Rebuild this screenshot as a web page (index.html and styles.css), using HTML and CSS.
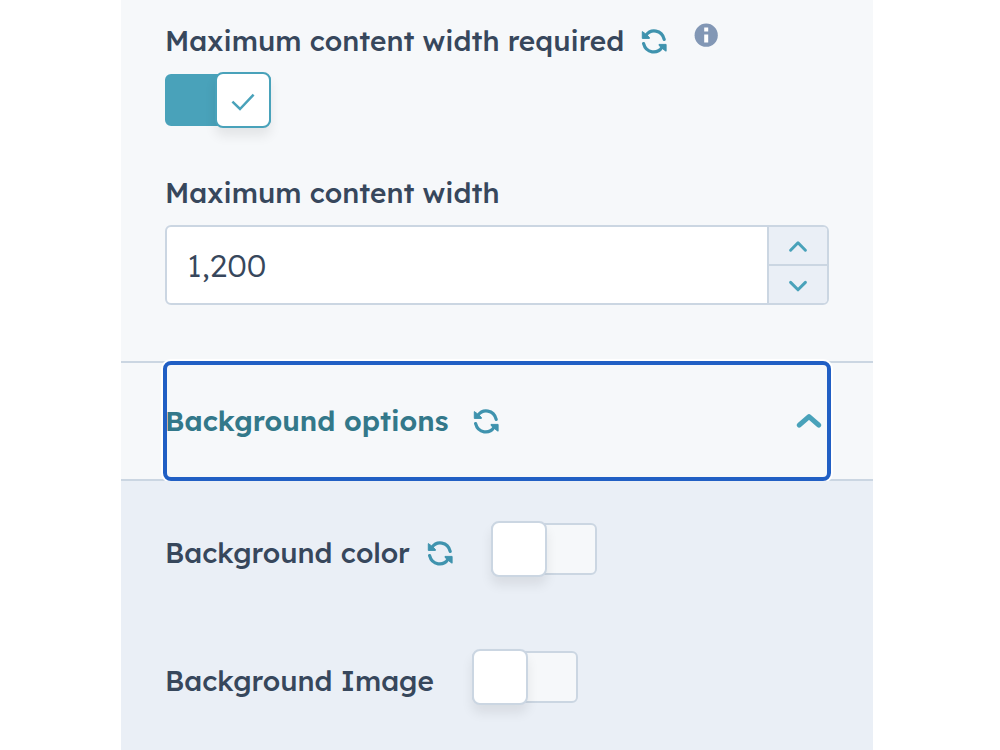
FILE: index.html
```
<!DOCTYPE html>
<html lang="en">
<head>
	<meta charset="utf-8">
	<meta name="viewport" content="width=device-width, initial-scale=1.0">
	<title>Section settings</title>
	<link rel="stylesheet" href="styles.css">
</head>
<body>

	<svg width="0" height="0" class="sprite" aria-hidden="true">
		<symbol id="refresh" viewBox="0 0 26 26">
			<path d="M5 7.4C9.5.6 20.8 1.4 23.2 11.4M2.6 15.6C5.2 25.6 16.5 26.2 21 19.4" fill="none" stroke="currentColor" stroke-width="3.2" stroke-linecap="round"/>
			<path d="M1.3 3.6L3.4 5 8.4 9.4V10.4H1.3zM25.1 23.2L23 21.8 18 17.4V16.4H25.1z" fill="currentColor" stroke="currentColor" stroke-linejoin="round"/>
		</symbol>
	</svg>

	<div class="panel">
		<div class="section">
			<div class="field-head">
				<label class="label" for="maxReq">Maximum content width required</label>
				<button class="icon-btn" type="button" aria-label="Reset"><svg class="refresh"><use href="#refresh"/></svg></button>
				<button class="icon-btn info" type="button" aria-label="Info">
					<svg viewBox="0 0 24 24"><circle cx="12.2" cy="12.2" r="11.6" fill="#8297b5"/><path d="M10.2 4.6h4v3.8h-4zM10.2 11.6h4v8h-4z" fill="#fff"/></svg>
				</button>
			</div>
			<div class="toggle">
				<input id="maxReq" type="checkbox" checked>
				<span class="thumb"><svg viewBox="0 0 24 18"><path d="M1.4 10.6L9 18 22.6 3.6" fill="none" stroke="currentColor" stroke-width="2.5"/></svg></span>
			</div>

			<label class="label label-block" for="maxWidth">Maximum content width</label>
			<div class="stepper">
				<input id="maxWidth" type="text" value="1,200">
				<div class="stepper-btns">
					<button type="button" aria-label="Increase"><svg viewBox="0 0 18 12"><path d="M1.6 10.2L9 2.8l7.4 7.4"/></svg></button>
					<button type="button" aria-label="Decrease"><svg viewBox="0 0 18 12"><path d="M1.6 3.4L9 10.8l7.4-7.4"/></svg></button>
				</div>
			</div>
		</div>

		<div class="accordion">
			<button class="accordion-btn" type="button" aria-expanded="true">
				<span>Background options</span>
				<svg class="refresh"><use href="#refresh"/></svg>
				<svg class="chevron" viewBox="0 0 24 14"><path d="M2.2 11.2L12 2.6l9.8 8.6"/></svg>
			</button>
		</div>

		<div class="options">
			<div class="row">
				<label class="label" for="bgColor">Background color</label>
				<button class="icon-btn" type="button" aria-label="Reset"><svg class="refresh"><use href="#refresh"/></svg></button>
				<div class="toggle">
					<input id="bgColor" type="checkbox">
					<span class="thumb"></span>
				</div>
			</div>
			<div class="row">
				<label class="label" for="bgImage">Background Image</label>
				<div class="toggle">
					<input id="bgImage" type="checkbox">
					<span class="thumb"></span>
				</div>
			</div>
		</div>
	</div>

</body>
</html>
```
FILE: styles.css
```
*{
	box-sizing: border-box;
}
body{
	margin: 0;
	background: #fff;
	color: #37475c;
	font-family: 'Lexend Deca', Lexend, Inter, sans-serif;
	font-size: 28px;
}
button{
	padding: 0;
	border: 0;
	background: none;
	font: inherit;
	cursor: pointer;
}
svg{
	display: block;
}
.sprite{
	position: absolute;
}

.panel{
	display: flex;
	flex-direction: column;
	min-height: 100vh;
	margin: 0 127px 0 121px;
	background: #f6f8fa;
}
.section{
	padding: 23px 44px 56px;
}
.field-head{
	display: flex;
	align-items: center;
	margin-bottom: 13px;
}
.label{
	font-weight: 500;
	line-height: 36px;
	white-space: nowrap;
}
.label-block{
	display: block;
	margin: 47px 0 14px;
}
.icon-btn{
	flex: none;
	margin-left: 17px;
}
.refresh{
	flex: none;
	width: 26px;
	height: 26px;
	color: #3f93ae;
	overflow: visible;
}
.info{
	align-self: flex-start;
	margin-left: 27px;
}
.info svg{
	width: 24px;
	height: 24px;
}

/* toggle */
.toggle{
	position: relative;
	display: flex;
	flex: none;
	align-items: center;
	width: 106px;
	height: 56px;
}
.toggle input{
	appearance: none;
	width: 100%;
	height: 52px;
	margin: 0;
	border: 2px solid #cbd6e2;
	border-radius: 6px;
	background: #f6f8fa;
	cursor: pointer;
}
.toggle .thumb{
	position: absolute;
	left: 0;
	top: 0;
	display: flex;
	align-items: center;
	justify-content: center;
	width: 56px;
	height: 56px;
	border: 2px solid #cbd6e2;
	border-radius: 8px;
	background: #fff;
	color: #49a2ba;
	box-shadow: 0 8px 12px rgba(0, 0, 0, .08);
	pointer-events: none;
}
.toggle .thumb svg{
	width: 24px;
	height: 18px;
	overflow: visible;
}
.toggle input:checked{
	border-color: #49a2ba;
	background: #49a2ba;
}
.toggle input:checked + .thumb{
	left: auto;
	right: 0;
	border-color: #49a2ba;
}

/* number field */
.stepper{
	display: flex;
	height: 80px;
	border: 2px solid #cbd6e2;
	border-radius: 6px;
	background: #fff;
	overflow: hidden;
}
.stepper input{
	flex: 1;
	min-width: 0;
	padding: 0 20px;
	border: 0;
	outline: 0;
	background: none;
	color: inherit;
	font-family: inherit;
	font-size: 32px;
	font-weight: 300;
}
.stepper-btns{
	display: flex;
	flex-direction: column;
	width: 60px;
	border-left: 2px solid #cbd6e2;
	background: #eaeff6;
}
.stepper-btns button{
	display: flex;
	flex: 1;
	align-items: center;
	justify-content: center;
}
.stepper-btns button + button{
	border-top: 2px solid #cbd6e2;
}
.stepper-btns svg{
	width: 18px;
	height: 12px;
	overflow: visible;
}
.stepper-btns path,
.chevron path{
	fill: none;
	stroke: #49a2ba;
	stroke-width: 3;
	stroke-linecap: round;
	stroke-linejoin: round;
}

/* accordion */
.accordion{
	padding: 0 44px;
	border-top: 2px solid #cbd6e2;
	border-bottom: 2px solid #cbd6e2;
}
.accordion-btn{
	display: flex;
	align-items: center;
	width: 100%;
	height: 116px;
	padding-right: 8px;
	border-radius: 6px;
	outline: 4px solid #215fc4;
	outline-offset: -2px;
	box-shadow: 0 0 0 4px #fff;
	color: #33788a;
	font-weight: 600;
	line-height: 36px;
	white-space: nowrap;
}
.accordion-btn .refresh{
	margin-left: 25px;
}
.chevron{
	width: 24px;
	height: 14px;
	margin-left: auto;
	overflow: visible;
}
.accordion .chevron path{
	stroke-width: 5;
}

.options{
	flex: 1;
	padding: 40px 44px 0;
	background: #eaeff6;
}
.row{
	display: flex;
	align-items: center;
	margin-bottom: 72px;
}
.row:last-child{
	margin-bottom: 44px;
}
.row .label,
.row .icon-btn{
	padding-top: 8px;
}
.row .toggle{
	margin-left: 38px;
}
```
